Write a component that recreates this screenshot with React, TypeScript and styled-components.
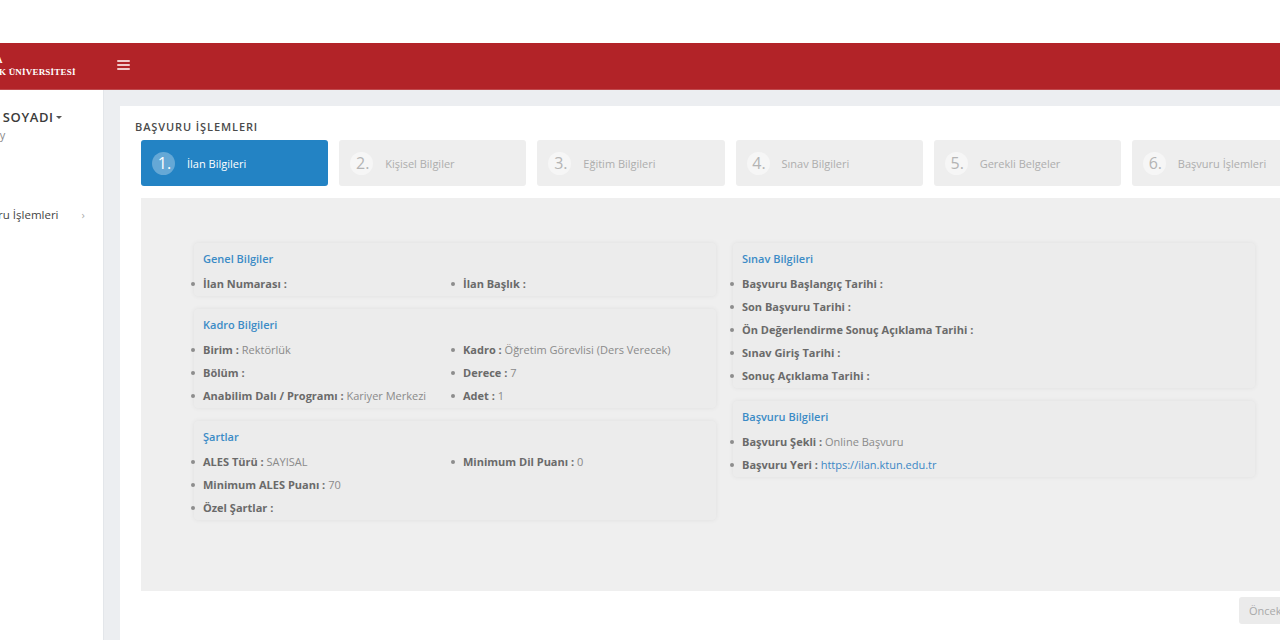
import React from "react";
import styled, { createGlobalStyle } from "styled-components";

const Global = createGlobalStyle`
  html, body { margin: 0; padding: 0; background: #ffffff; }
  body { font-family: "Open Sans", "Noto Sans", sans-serif; overflow: hidden; }
  * { box-sizing: border-box; }
`;

const Page = styled.div`
  width: 1280px;
  height: 640px;
  display: flex;
  flex-direction: column;
  overflow: hidden;
`;

const TopStrip = styled.div`
  height: 43px;
  background: #ffffff;
  flex: none;
`;

const Header = styled.header`
  height: 47px;
  flex: none;
  background: #b22328;
  display: flex;
  align-items: center;
  border-bottom: 1px solid #c04a4e;
`;

const LogoBox = styled.div`
  width: 104px;
  height: 100%;
  overflow: hidden;
  display: flex;
  align-items: center;
  flex: none;
`;

const LogoText = styled.div`
  margin-left: -31px;
  font-family: "Liberation Serif", "DejaVu Serif", serif;
  font-weight: 700;
  color: #ffffff;
  font-size: 9px;
  line-height: 12px;
  white-space: nowrap;
  letter-spacing: 0.2px;
`;

const Burger = styled.button`
  border: 0;
  background: transparent;
  padding: 0;
  margin-left: 13px;
  width: 13px;
  height: 10px;
  display: flex;
  flex-direction: column;
  justify-content: space-between;
  margin-top: -2px;
  span {
    display: block;
    height: 2px;
    background: #f1c9ca;
    border-radius: 1px;
  }
`;

const Body = styled.div`
  flex: 1;
  display: flex;
  min-height: 0;
`;

const Sidebar = styled.aside`
  width: 104px;
  flex: none;
  background: #ffffff;
  border-right: 1px solid #e3e6ea;
  overflow: hidden;
  padding-top: 18px;
`;

const UserName = styled.div`
  margin-left: -25px;
  font-size: 13px;
  font-weight: 600;
  color: #3b3b3b;
  white-space: nowrap;
  letter-spacing: 0.6px;
  display: flex;
  align-items: center;
  gap: 2px;
  &::after {
    content: "";
    border-left: 3px solid transparent;
    border-right: 3px solid transparent;
    border-top: 3px solid #555;
    margin-top: 1px;
  }
`;

const UserRole = styled.div`
  margin-left: -20px;
  font-size: 11px;
  color: #8a8a8a;
  margin-top: 1px;
  white-space: nowrap;
`;

const NavItem = styled.div`
  margin-top: 65px;
  display: flex;
  align-items: center;
  white-space: nowrap;
  font-size: 11.5px;
  color: #444;
  span.t { margin-left: -34px; }
  span.c {
    margin-left: 23px;
    color: #aaa;
    font-size: 11px;
  }
`;

const Main = styled.main`
  flex: 1;
  background: #eceef1;
  padding: 16px 0 0 16px;
  overflow: hidden;
`;

const Panel = styled.section`
  width: 1200px;
  min-height: 600px;
  background: #ffffff;
  padding: 14px 1px 0 21px;
`;

const Title = styled.h2`
  margin: 0 0 6px -6px;
  font-size: 11px;
  font-weight: 600;
  letter-spacing: 0.9px;
  color: #4b4b4b;
  line-height: 14px;
`;

const Steps = styled.div`
  display: grid;
  grid-template-columns: repeat(6, 1fr);
  gap: 11px;
`;

const Step = styled.div<{ $active?: boolean }>`
  height: 46px;
  border-radius: 3px;
  background: ${(p) => (p.$active ? "#2383c4" : "#eeeeee")};
  display: flex;
  align-items: center;
  padding-left: 11px;
  gap: 12px;
`;

const StepNum = styled.span<{ $active?: boolean }>`
  width: 23px;
  height: 23px;
  border-radius: 50%;
  background: ${(p) => (p.$active ? "rgba(255,255,255,0.3)" : "#f6f6f6")};
  color: ${(p) => (p.$active ? "#ffffff" : "#b4b4b4")};
  font-size: 16px;
  line-height: 23px;
  text-align: center;
  padding-left: 2px;
  flex: none;
`;

const StepLabel = styled.span<{ $active?: boolean }>`
  font-size: 11px;
  color: ${(p) => (p.$active ? "#ffffff" : "#adadad")};
`;

const FormArea = styled.div`
  margin-top: 12px;
  height: 393px;
  background: #efefef;
  padding: 45px 53px 0 53px;
  display: grid;
  grid-template-columns: 522px 522px;
  column-gap: 17px;
  align-items: start;
`;

const Column = styled.div`
  display: flex;
  flex-direction: column;
  gap: 13px;
`;

const Card = styled.div`
  background: #ececec;
  border-radius: 4px;
  box-shadow: 0 0 5px rgba(0, 0, 0, 0.07);
  padding: 8px 0 1px 9px;
`;

const CardTitle = styled.div`
  font-size: 11px;
  font-weight: 600;
  color: #3b8bc6;
  line-height: 16px;
  margin-bottom: 5px;
`;

const Cols = styled.div`
  display: flex;
`;

const List = styled.ul<{ $w?: number }>`
  margin: 0;
  padding: 0;
  list-style: none;
  width: ${(p) => (p.$w ? `${p.$w}px` : "auto")};
`;

const Item = styled.li`
  font-size: 11px;
  line-height: 23px;
  color: #8a8a8a;
  white-space: nowrap;
  &::before {
    content: "";
    display: inline-block;
    width: 4px;
    height: 4px;
    border-radius: 50%;
    background: #8d8d8d;
    margin-left: -12px;
    margin-right: 8px;
    vertical-align: middle;
    position: relative;
    top: -1px;
  }
  b {
    font-weight: 700;
    color: #6a6a6a;
  }
  a {
    color: #3b87c6;
    text-decoration: none;
  }
`;

const Footer = styled.div`
  display: flex;
  justify-content: flex-end;
  padding-top: 6px;
`;

const PrevButton = styled.button`
  min-width: 80px;
  height: 27px;
  border: 0;
  border-radius: 3px;
  background: #ebebeb;
  color: #a9a9a9;
  font-family: inherit;
  font-size: 11px;
  text-align: left;
  padding: 0 0 0 10px;
`;

type Row = { label: string; value?: React.ReactNode };

const Rows = ({ rows, w }: { rows: Row[]; w?: number }) => (
  <List $w={w}>
    {rows.map((r, i) => (
      <Item key={i}>
        <b>{r.label} :</b>
        {r.value ? <> {r.value}</> : null}
      </Item>
    ))}
  </List>
);

const steps = [
  "İlan Bilgileri",
  "Kişisel Bilgiler",
  "Eğitim Bilgileri",
  "Sınav Bilgileri",
  "Gerekli Belgeler",
  "Başvuru İşlemleri",
];

export default function App() {
  return (
    <>
      <Global />
      <Page>
        <TopStrip />
        <Header>
          <LogoBox>
            <LogoText>
              KONYA
              <br />
              TEKNİK ÜNİVERSİTESİ
            </LogoText>
          </LogoBox>
          <Burger aria-label="menu">
            <span />
            <span />
            <span />
          </Burger>
        </Header>
        <Body>
          <Sidebar>
            <UserName>ADI SOYADI</UserName>
            <UserRole>Aday</UserRole>
            <NavItem>
              <span className="t">Başvuru İşlemleri</span>
              <span className="c">›</span>
            </NavItem>
          </Sidebar>
          <Main>
            <Panel>
              <Title>BAŞVURU İŞLEMLERI</Title>
              <Steps>
                {steps.map((s, i) => (
                  <Step key={s} $active={i === 0}>
                    <StepNum $active={i === 0}>{i + 1}.</StepNum>
                    <StepLabel $active={i === 0}>{s}</StepLabel>
                  </Step>
                ))}
              </Steps>
              <FormArea>
                <Column>
                  <Card>
                    <CardTitle>Genel Bilgiler</CardTitle>
                    <Cols>
                      <Rows w={260} rows={[{ label: "İlan Numarası" }]} />
                      <Rows rows={[{ label: "İlan Başlık" }]} />
                    </Cols>
                  </Card>
                  <Card>
                    <CardTitle>Kadro Bilgileri</CardTitle>
                    <Cols>
                      <Rows
                        w={260}
                        rows={[
                          { label: "Birim", value: "Rektörlük" },
                          { label: "Bölüm" },
                          { label: "Anabilim Dalı / Programı", value: "Kariyer Merkezi" },
                        ]}
                      />
                      <Rows
                        rows={[
                          { label: "Kadro", value: "Öğretim Görevlisi (Ders Verecek)" },
                          { label: "Derece", value: "7" },
                          { label: "Adet", value: "1" },
                        ]}
                      />
                    </Cols>
                  </Card>
                  <Card>
                    <CardTitle>Şartlar</CardTitle>
                    <Cols>
                      <Rows
                        w={260}
                        rows={[
                          { label: "ALES Türü", value: "SAYISAL" },
                          { label: "Minimum ALES Puanı", value: "70" },
                          { label: "Özel Şartlar" },
                        ]}
                      />
                      <Rows rows={[{ label: "Minimum Dil Puanı", value: "0" }]} />
                    </Cols>
                  </Card>
                </Column>
                <Column>
                  <Card>
                    <CardTitle>Sınav Bilgileri</CardTitle>
                    <Rows
                      rows={[
                        { label: "Başvuru Başlangıç Tarihi" },
                        { label: "Son Başvuru Tarihi" },
                        { label: "Ön Değerlendirme Sonuç Açıklama Tarihi" },
                        { label: "Sınav Giriş Tarihi" },
                        { label: "Sonuç Açıklama Tarihi" },
                      ]}
                    />
                  </Card>
                  <Card>
                    <CardTitle>Başvuru Bilgileri</CardTitle>
                    <Rows
                      rows={[
                        { label: "Başvuru Şekli", value: "Online Başvuru" },
                        {
                          label: "Başvuru Yeri",
                          value: <a href="#">https://ilan.ktun.edu.tr</a>,
                        },
                      ]}
                    />
                  </Card>
                </Column>
              </FormArea>
              <Footer>
                <PrevButton>Önceki</PrevButton>
              </Footer>
            </Panel>
          </Main>
        </Body>
      </Page>
    </>
  );
}
